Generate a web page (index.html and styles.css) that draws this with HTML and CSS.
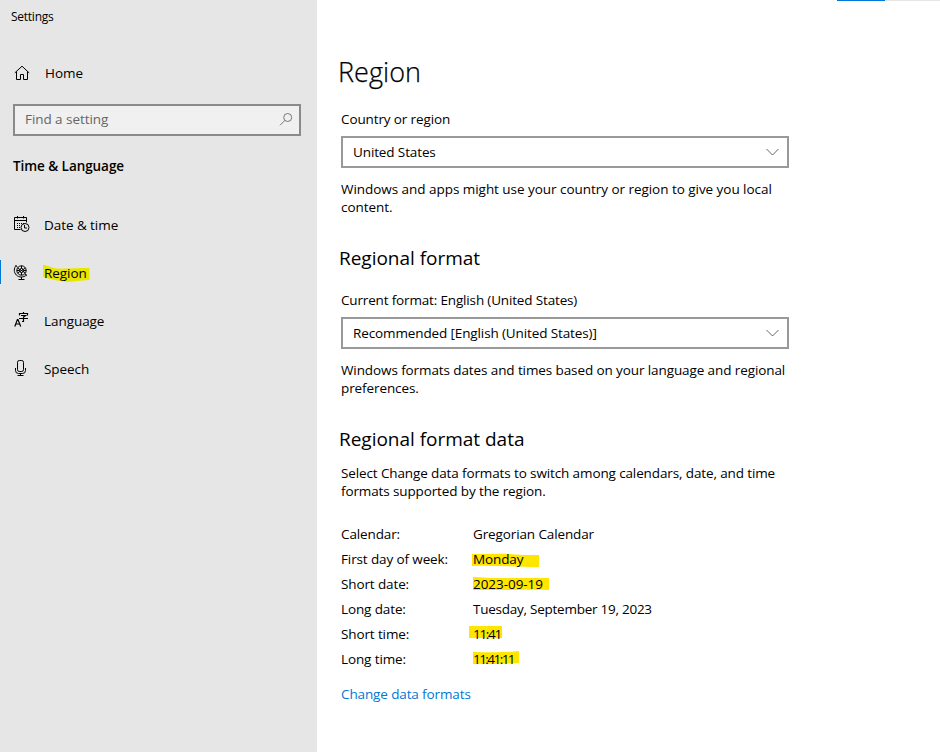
FILE: index.html
```html
<!DOCTYPE html>
<html lang="en">
<head>
<meta charset="utf-8">
<title>Settings</title>
<link rel="stylesheet" href="styles.css">
</head>
<body>
<div class="window">
  <aside class="sidebar">
    <div class="app-title">Settings</div>
    <a class="home">
      <svg class="icon" viewBox="0 0 16 16"><path d="M.8 7.900 8 1.200l7.200 6.700M2.500 6.600v7.900h4V9.500h3v5h4V6.600"/></svg>
      <span>Home</span>
    </a>
    <div class="search">
      <span>Find a setting</span>
      <svg class="search-icon" viewBox="0 0 14 14"><circle cx="8.700" cy="5.500" r="4"/><path d="M5.900 8.400 1 13.300"/></svg>
    </div>
    <h2 class="category">Time &amp; Language</h2>
    <nav class="nav">
      <a class="nav-item">
        <svg class="icon" viewBox="0 0 16 16"><path d="M6.500 12.500h-6v-12h12v5M.5 3.500h12M3.500-1v2.500M9.500-1v2.500"/><path class="dots" d="M3 6.500h7M3 8.500h4M3 10.500h4"/><circle cx="11" cy="10.500" r="4"/><path d="M10.500 8v3H13"/></svg>
        <span>Date &amp; time</span>
      </a>
      <a class="nav-item selected">
        <svg class="icon globe" viewBox="0 0 16 16"><circle cx="7.500" cy="5.500" r="4.700"/><circle cx="7.500" cy="5.500" r="2"/><path d="M3.500 3 11.500 8M3.500 8l8-5M2.800 5.500h2.700M9.500 5.500h2.700M7.500.800v2.700M7.500 7.500v2.700M2.300.300C-.4 3.200-.3 7.400 2.300 10c2.700 2.700 7.200 2.700 10.200 0M7.500 12v2.500M4.500 14.500h6M1.500.500l2 1.500M13 10.500l-2-1.500"/></svg>
        <span class="marked">Region<svg class="mark mark-region" viewBox="0 0 47 17"><path d="M0 0c6 .5 8 3 14 3.500C22 4 31 3 46.500 3v12C35 15.500 31 17 23 16.700 15 16 8 14.500 0 12Z"/></svg></span>
      </a>
      <a class="nav-item">
        <svg class="icon language" viewBox="0 0 16 16"><path d="m.8 13.500 2.600-7h.6l2.700 7M1.700 11h4M5.500 2.500v-2h8v2M9.500-1V.5M7 2.500h4.500L9.500 4v4.500H8M5 5.500h9"/></svg>
        <span>Language</span>
      </a>
      <a class="nav-item">
        <svg class="icon" viewBox="0 0 16 16"><rect x="3.500" y="-.5" width="6" height="11" rx="1.800"/><path d="M1.500 7v2.500q0 3 3 3h4q3 0 3-3V7M6.500 12.500v2M3.500 14.500h6"/></svg>
        <span>Speech</span>
      </a>
    </nav>
  </aside>
  <main class="content">
    <h1>Region</h1>
    <p class="label">Country or region</p>
    <div class="select"><span>United States</span><svg class="chevron" viewBox="0 0 13 8"><path d="m.5 1 6 6 6-6"/></svg></div>
    <p class="note note-region">Windows and apps might use your country or region to give you local<br>content.</p>
    <h2>Regional format</h2>
    <p class="label label-format">Current format: English (United States)</p>
    <div class="select"><span>Recommended [English (United States)]</span><svg class="chevron" viewBox="0 0 13 8"><path d="m.5 1 6 6 6-6"/></svg></div>
    <p class="note">Windows formats dates and times based on your language and regional<br>preferences.</p>
    <h2>Regional format data</h2>
    <p class="intro">Select Change data formats to switch among calendars, date, and time<br>formats supported by the region.</p>
    <dl class="formats">
      <dt>Calendar:</dt><dd>Gregorian Calendar</dd>
      <dt>First day of week:</dt><dd><span class="marked">Monday<svg class="mark mark-monday" viewBox="0 0 67 15"><path d="M0 1c18 0 36-1 51 1h16v12c-22 0-42-2-67-1Z"/></svg></span></dd>
      <dt>Short date:</dt><dd><span class="marked short-date">2023-09-19<svg class="mark mark-date" viewBox="0 0 76 13"><path d="M0 0c8 0 12 1 20 1h56v12c-26-1-50 1-76 0Z"/></svg></span></dd>
      <dt>Long date:</dt><dd class="long-date">Tuesday, September 19, 2023</dd>
      <dt>Short time:</dt><dd><span class="marked clock">11:41<svg class="mark mark-short" viewBox="0 0 33 13"><path d="M0 0h33v12c-12 1-20 0-33 0Z"/></svg></span></dd>
      <dt>Long time:</dt><dd><span class="marked clock clock-long">11:41:11<svg class="mark mark-long" viewBox="0 0 46 13"><path d="M0 1c16 0 30 1 46-1v12c-16 1-30 1-46 1Z"/></svg></span></dd>
    </dl>
    <a class="link">Change data formats</a>
  </main>
  <div class="top-strip"></div>
</div>
</body>
</html>
```
FILE: styles.css
```css
* { box-sizing: border-box; }
body {
  margin: 0;
  font-family: "Open Sans", "Noto Sans", sans-serif;
  font-size: 13.5px;
  line-height: 18px;
  letter-spacing: -0.06px;
  color: #000;
  background: #fff;
}
h1, h2, p, dl, dd { margin: 0; }
.window { position: relative; display: flex; width: 940px; height: 752px; overflow: hidden; }
.sidebar { width: 317px; flex: none; background: #e6e6e6; }
.app-title { padding: 8px 0 0 11px; font-size: 12px; height: 49px; letter-spacing: -0.25px; }
.icon { width: 16px; height: 16px; flex: none; overflow: visible; fill: none; stroke: #000; stroke-width: 1; }
.icon .dots { stroke-dasharray: 1 1; }
.language { stroke-width: 1.2; }
.home { display: flex; align-items: center; gap: 15px; height: 48px; padding-left: 14px; }
.search {
  display: flex; align-items: center; justify-content: space-between;
  width: 288px; height: 32px; margin: 7px 0 0 13px; padding: 0 6px 2px 10px;
  border: 2px solid #8a8a8a; background: #f0f0f0; color: #666;
}
.search-icon { width: 14px; height: 14px; fill: none; stroke: #777; }
.category { margin: 21px 0 0 13px; font-size: 13.5px; font-weight: 600; line-height: 18px; }
.nav { margin-top: 26px; }
.nav-item { display: flex; align-items: center; gap: 14px; height: 48px; padding: 0 0 0 14px; }
.selected { background: linear-gradient(#0078d7, #0078d7) 0 11px / 1px 24px no-repeat; }
.marked { position: relative; z-index: 0; }
.mark { position: absolute; z-index: -1; fill: #ffe600; }
.mark-region { left: -1px; top: 1px; width: 47px; height: 17px; fill: #e6e600; }
.mark-monday { left: -1px; top: 3px; width: 67px; height: 15px; }
.mark-date { left: 0; top: 2px; width: 76px; height: 13px; }
.mark-short { left: -4px; top: 1px; width: 33px; height: 13px; }
.mark-long { left: 0; top: 1px; width: 46px; height: 13px; }
.content { width: 448px; margin-left: 24px; padding-top: 54px; flex: none; letter-spacing: -0.12px; }
h1 { margin-left: -3px; font-size: 27px; font-weight: 300; line-height: 36px; letter-spacing: 0.05px; -webkit-text-stroke: 0.25px #000; }
.content h2 { margin: 28px 0 0 -2px; font-size: 19px; font-weight: 400; line-height: 28px; letter-spacing: -0.02px; }
.label { margin-top: 20px; }
.content .label-format { margin-top: 19px; letter-spacing: -0.16px; }
.select {
  display: flex; align-items: center; justify-content: space-between;
  height: 32px; margin-top: 8px; padding: 0 8px 0 10px; border: 2px solid #999;
}
.chevron { width: 13px; height: 8px; fill: none; stroke: #666; }
.note { margin-top: 12px; white-space: nowrap; letter-spacing: -0.1px; }
.note-region { letter-spacing: -0.04px; }
.intro { margin-top: 11px; white-space: nowrap; }
.formats { display: grid; grid-template-columns: 132px 1fr; grid-auto-rows: 25px; margin-top: 21px; align-items: center; }
.short-date { letter-spacing: -0.05px; }
.long-date { letter-spacing: -0.25px; }
.clock { letter-spacing: -1.3px; }
.clock-long { letter-spacing: -1.55px; }
.link { display: block; margin-top: 14px; color: #0078d7; }
.top-strip {
  position: absolute; left: 837px; top: 0; width: 103px; height: 1px;
  background: linear-gradient(90deg, #0078d7 48px, #e6e6e6 48px);
}
```
